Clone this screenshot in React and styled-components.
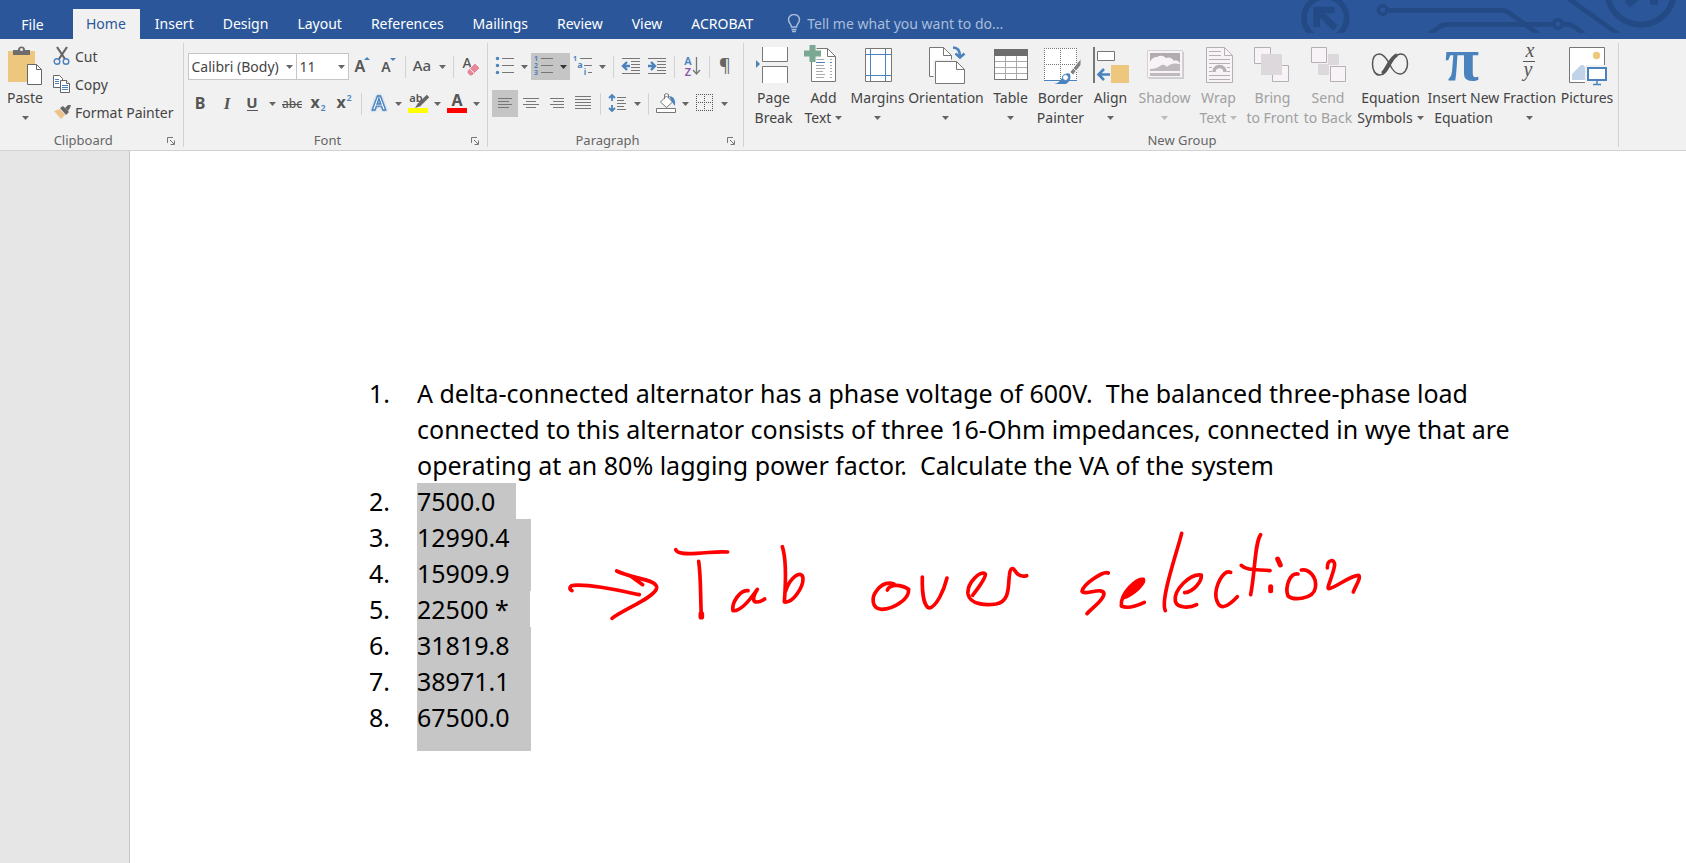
import React from "react";
import styled, { createGlobalStyle } from "styled-components";

const GlobalStyle = createGlobalStyle`
  * {
    box-sizing: border-box;
  }
  html, body, #root {
    height: 100%;
  }
  body {
    margin: 0;
    font-family: "Noto Sans", "Open Sans", sans-serif;
    font-size: 14px;
    color: #444;
    background: #fff;
  }
  button, input, select {
    font: inherit;
    color: inherit;
    border: none;
    background: none;
    padding: 0;
    margin: 0;
    outline: none;
  }
`;

const Window = styled.div`
  display: flex;
  flex-direction: column;
  min-height: 100%;
  overflow-x: hidden;
`;

const TabBar = styled.header`
  display: flex;
  align-items: flex-end;
  height: 39px;
  background: #2b579a;
  color: #fff;
`;

const Tabs = styled.nav`
  display: flex;
`;

const Tab = styled.button`
  height: 30px;
  padding: ${(props) => (props.$active ? "0 14px 0 13px" : "0 14px 0 15px")};
  line-height: 28px;
  white-space: nowrap;
  color: ${(props) => (props.$active ? "#2b579a" : "#fff")};
  background: ${(props) => (props.$active ? "#f1f1f1" : "transparent")};
`;

const FileTab = styled(Tab)`
  width: 73px;
  padding: 2px 8px 0 0;
`;

const TellMe = styled.label`
  display: flex;
  align-items: center;
  gap: 6px;
  height: 30px;
  margin-left: 20px;
  padding-bottom: 2px;
  color: #a9bddb;
`;

const TellMeInput = styled.input`
  width: 220px;
  &::placeholder {
    color: #a9bddb;
    opacity: 1;
  }
`;

const Circuit = styled.svg`
  margin-left: auto;
  align-self: flex-start;
  flex-shrink: 0;
`;

const Ribbon = styled.section`
  display: flex;
  height: 112px;
  padding: 4px 0 3px;
  background: #f1f1f1;
  border-bottom: 1px solid #d2d2d2;
`;

const Group = styled.div`
  display: flex;
  flex-direction: column;
  flex-shrink: 0;
  padding: 0 3px 0 4px;
  border-right: 1px solid #d2d2d2;
`;

const Tools = styled.div`
  display: flex;
  flex: 1;
`;

const Rows = styled.div`
  display: flex;
  flex-direction: column;
  gap: 10px;
  padding-top: 10px;
`;

const Row = styled.div`
  display: flex;
  align-items: center;
  height: 27px;
`;

const GroupFooter = styled.div`
  display: flex;
  align-items: center;
  height: 13px;
  font-size: 13px;
  line-height: 13px;
  color: #666;
`;

const GroupName = styled.span`
  flex: 1;
  text-align: center;
`;

const Launcher = styled.button`
  display: flex;
  justify-content: center;
  width: 18px;
`;

const Divider = styled.span`
  width: 1px;
  height: 22px;
  margin: 0 4px;
  background: #d2d2d2;
`;

const ToolButton = styled.button`
  display: flex;
  align-items: center;
  height: 27px;
  background: ${(props) => (props.$active ? "#c5c5c5" : "transparent")};
`;

const ArrowSlot = styled.span`
  display: flex;
  justify-content: center;
  width: 13px;
`;

const Combo = styled.label`
  display: flex;
  align-items: center;
  width: ${(props) => props.$width}px;
  height: 27px;
  padding-left: 2px;
  border: 1px solid #c6c6c6;
  background: #fff;
  & + & {
    border-left: none;
  }
`;

const ComboSelect = styled.select`
  flex: 1;
  min-width: 0;
  appearance: none;
  overflow: hidden;
`;

const PasteButton = styled.button`
  display: flex;
  flex-direction: column;
  align-items: center;
  width: 42px;
  padding-top: 2px;
  line-height: 20px;
`;

const ClipList = styled.div`
  display: flex;
  flex-direction: column;
  padding-left: 7px;
`;

const ClipButton = styled.button`
  display: flex;
  align-items: center;
  gap: 4px;
  height: 28px;
  padding: 0 7px 2px 0;
  white-space: nowrap;
`;

const BigButton = styled.button`
  display: flex;
  flex-direction: column;
  align-items: center;
  width: ${(props) => props.$width}px;
  padding-top: 2px;
  line-height: 20px;
  white-space: nowrap;
  &:disabled {
    color: #a0a0a0;
  }
`;

const IconArea = styled.span`
  display: flex;
  height: 43px;
`;

const LabelLine = styled.span`
  display: flex;
  align-items: center;
  justify-content: center;
  gap: 4px;
  height: 20px;
`;

const Workspace = styled.main`
  display: flex;
  flex: 1;
  background: #e6e6e6;
`;

const Sheet = styled.article`
  position: relative;
  flex: 1;
  margin-left: 129px;
  padding: 224px 120px 60px 239px;
  border-left: 1px solid #c6c6c6;
  background: #fff;
  color: #000;
  font-size: 25px;
  line-height: 36px;
`;

const Questions = styled.ol`
  margin: 0;
  padding: 0;
  list-style: none;
`;

const Question = styled.li`
  display: grid;
  grid-template-columns: 48px minmax(0, 1140px);
`;

const Paragraph = styled.span`
  white-space: pre-wrap;
`;

const Selected = styled.span`
  justify-self: start;
  padding: 0 21px ${(props) => (props.$last ? 16 : 0)}px 0;
  background: #c6c6c6;
`;

// pen annotation lies over the page
const Ink = styled.svg`
  position: absolute;
  left: 430px;
  top: 374px;
`;

const GREY = "#777";
const BLUE = "#4a82bd";
const SERIF = "Liberation Serif, serif";

const Arrow = ({ color = "#666" }) => (
  <svg width="7" height="4" viewBox="0 0 7 4" aria-hidden="true">
    <path d="M0 0h7L3.5 4z" fill={color} />
  </svg>
);

const Small = ({ label, arrow, active, children }) => (
  <ToolButton $active={active} aria-label={label} title={label}>
    <svg
      width="26"
      height="27"
      viewBox="0 0 26 27"
      fill="none"
      stroke={GREY}
      aria-hidden="true"
    >
      {children}
    </svg>
    {arrow && (
      <ArrowSlot>
        <Arrow color={active ? "#333" : "#666"} />
      </ArrowSlot>
    )}
  </ToolButton>
);

const Glyph = ({ x = 13, y = 19, size = 17, fill = "#555", ...rest }) => (
  <text
    x={x}
    y={y}
    fontSize={size}
    fill={fill}
    stroke="none"
    textAnchor="middle"
    {...rest}
  />
);

const Big = ({ label, lines, width, arrow, disabled, children }) => (
  <BigButton $width={width} disabled={disabled} aria-label={label}>
    <IconArea>
      <svg
        width="42"
        height="42"
        viewBox="-1 0 42 42"
        fill="none"
        stroke={disabled ? "#b4b0b4" : GREY}
        aria-hidden="true"
      >
        {children}
      </svg>
    </IconArea>
    <LabelLine>{lines[0]}</LabelLine>
    <LabelLine>
      {lines[1]}
      {arrow && <Arrow color={disabled ? "#bbb" : "#666"} />}
    </LabelLine>
  </BigButton>
);

const Footer = ({ name, launcher }) => (
  <GroupFooter>
    <GroupName>{name}</GroupName>
    {launcher && (
      <Launcher aria-label={`${name} settings`}>
        <svg width="8" height="8" viewBox="0 0 8 8" fill="none" stroke={GREY}>
          <path d="M.5 6V.5H6M3 3l4 4M7.5 3.5v4h-4" />
        </svg>
      </Launcher>
    )}
  </GroupFooter>
);

const ClipboardGroup = () => (
  <Group>
    <Tools>
      <PasteButton>
        <IconArea>
          <svg width="36" height="42" viewBox="0 0 36 42" aria-hidden="true">
            <path d="M1 6h27v31H1z" fill="#eec77e" />
            <path d="M6 5h5a3.5 3.5 0 0 1 7 0h5v5H6z" fill="#6d6d6d" />
            <circle cx="14.500" cy="4.500" r="1.500" fill="#f1f1f1" />
            <path
              d="M20.500 19.500h9l5 5v15h-14z"
              fill="#fff"
              stroke="#666"
            />
            <path d="M29.500 19.500v5h5" fill="none" stroke="#666" />
          </svg>
        </IconArea>
        <LabelLine>Paste</LabelLine>
        <LabelLine>
          <Arrow />
        </LabelLine>
      </PasteButton>
      <ClipList>
        <ClipButton>
          <svg width="18" height="20" viewBox="0 0 18 20" fill="none">
            <path d="M4 1l8 12M14 1L6 13" stroke="#666" strokeWidth="2.200" />
            <circle cx="4" cy="15.500" r="2.800" stroke={BLUE} strokeWidth="1.400" />
            <circle cx="13" cy="15.500" r="2.800" stroke={BLUE} strokeWidth="1.400" />
          </svg>
          Cut
        </ClipButton>
        <ClipButton>
          <svg width="18" height="20" viewBox="0 0 18 20" fill="#fff">
            <path d="M.5 1.500h6l3 3v9h-9z" stroke="#666" />
            <path d="M2 5.500h4M2 7.500h4M2 9.500h4" stroke={BLUE} />
            <path d="M7.500 6.500h6l3 3v9h-9z" stroke="#666" />
            <path d="M13.500 6.500v3h3" stroke="#666" />
            <path d="M9 11.500h6M9 13.500h6M9 15.500h6" stroke={BLUE} />
          </svg>
          Copy
        </ClipButton>
        <ClipButton>
          <svg width="18" height="20" viewBox="0 0 18 20">
            <path d="M1 9l6-2 5 6-4 4z" fill="#eec38a" />
            <path d="M7 6l3-2 6 6-3 3z" fill="#666" />
            <path d="M12 6l3-3h3l-1 3-2 3z" fill="#666" />
          </svg>
          Format Painter
        </ClipButton>
      </ClipList>
    </Tools>
    <Footer name="Clipboard" launcher />
  </Group>
);

const FontGroup = () => (
  <Group>
    <Tools>
      <Rows>
        <Row>
          <Combo $width={109}>
            <ComboSelect aria-label="Font">
              <option>Calibri (Body)</option>
            </ComboSelect>
            <ArrowSlot>
              <Arrow />
            </ArrowSlot>
          </Combo>
          <Combo $width={52}>
            <ComboSelect aria-label="Font size">
              <option>11</option>
            </ComboSelect>
            <ArrowSlot>
              <Arrow />
            </ArrowSlot>
          </Combo>
          <Small label="Grow font">
            <Glyph x={11} size={16} fontWeight="600">A</Glyph>
            <path d="M15 7l3-3 3 3z" fill={BLUE} stroke="none" />
          </Small>
          <Small label="Shrink font">
            <Glyph x={11} size={14} fontWeight="600">A</Glyph>
            <path d="M15 5h6l-3 3z" fill={BLUE} stroke="none" />
          </Small>
          <Divider />
          <Small label="Change case" arrow>
            <Glyph x={12} size={15} y={18} fontWeight="500">Aa</Glyph>
          </Small>
          <Divider />
          <Small label="Clear formatting">
            <Glyph x={9} y={15} size={14} fontWeight="500">A</Glyph>
            <path d="M9 18l8-8 5 5-8 8h-2l-3-3z" fill="#e8889a" stroke="#f1f1f1" />
            <path d="M11 15l5 5" stroke="#f1f1f1" />
          </Small>
        </Row>
        <Row>
          <Small label="Bold">
            <Glyph x={12} size={16} fontWeight="700">B</Glyph>
          </Small>
          <Small label="Italic">
            <Glyph size={17} fontWeight="700" fontStyle="italic" fontFamily={SERIF}>I</Glyph>
          </Small>
          <Small label="Underline" arrow>
            <Glyph x={12} size={15} y={18} fontWeight="700">U</Glyph>
            <path d="M7 20.500h11" stroke="#555" />
          </Small>
          <Small label="Strikethrough">
            <Glyph size={12} y={18} fontWeight="500">abc</Glyph>
            <path d="M3 14.500h20" stroke="#555" />
          </Small>
          <Small label="Subscript">
            <Glyph x={10} y={18} size={16} fontWeight="700">x</Glyph>
            <Glyph x={18} y={21} size={9} fill={BLUE} fontWeight="600">2</Glyph>
          </Small>
          <Small label="Superscript">
            <Glyph x={10} y={18} size={16} fontWeight="700">x</Glyph>
            <Glyph x={18} y={11} size={9} fill={BLUE} fontWeight="600">2</Glyph>
          </Small>
          <Divider />
          <Small label="Text effects" arrow>
            <text
              x="13"
              y="20"
              fontSize="20"
              fontWeight="600"
              textAnchor="middle"
              fill="#fff"
              stroke={BLUE}
              strokeWidth="1.300"
              filter="drop-shadow(0 0 1px #7fb0e0)"
            >
              A
            </text>
          </Small>
          <Small label="Highlight" arrow>
            <Glyph x={11} y={12} size={11} fontWeight="600">ab</Glyph>
            <path d="M23 6l-9 9" strokeWidth="3.500" stroke="#666" />
            <path d="M13 13l3 3-6 2z" fill="#666" stroke="none" />
            <path d="M3 18h20v5H3z" fill="#ff0" stroke="none" />
          </Small>
          <Small label="Font color" arrow>
            <Glyph x={13} y={16} size={16} fontWeight="700">A</Glyph>
            <path d="M3 18h20v5H3z" fill="#f00" stroke="none" />
          </Small>
        </Row>
      </Rows>
    </Tools>
    <Footer name="Font" launcher />
  </Group>
);

const ParagraphGroup = () => (
  <Group>
    <Tools>
      <Rows>
        <Row>
          <Small label="Bullets" arrow>
            <path d="M10 5.500h12M10 12.500h12M10 19.500h12" />
            <g fill={BLUE} stroke="none">
              <circle cx="5.500" cy="5.500" r="1.700" />
              <circle cx="5.500" cy="12.500" r="1.700" />
              <circle cx="5.500" cy="19.500" r="1.700" />
            </g>
          </Small>
          <Small label="Numbering" arrow active>
            <path d="M10 5.500h12M10 12.500h12M10 19.500h12" />
            <g fontWeight="700">
              <Glyph x={5} y={8} size={7} fill={BLUE}>1</Glyph>
              <Glyph x={5} y={15} size={7} fill={BLUE}>2</Glyph>
              <Glyph x={5} y={22} size={7} fill={BLUE}>3</Glyph>
            </g>
          </Small>
          <Small label="Multilevel list" arrow>
            <path d="M10 5.500h12M14 12.500h8M18 19.500h4" />
            <g fontWeight="700">
              <Glyph x={5} y={8} size={7} fill={BLUE}>1</Glyph>
              <Glyph x={10} y={15} size={9} fill={BLUE}>a</Glyph>
              <Glyph x={15} y={22} size={8} fill={BLUE}>i</Glyph>
            </g>
          </Small>
          <Divider />
          <Small label="Decrease indent">
            <path d="M4 5.500h18M13 8.500h9M13 11.500h9M13 14.500h9M13 17.500h9M4 20.500h18" />
            <path d="M12 13H6M9 9l-4 4 4 4" stroke={BLUE} strokeWidth="2.400" />
          </Small>
          <Small label="Increase indent">
            <path d="M4 5.500h18M13 8.500h9M13 11.500h9M13 14.500h9M13 17.500h9M4 20.500h18" />
            <path d="M4 13h6M7 9l4 4-4 4" stroke={BLUE} strokeWidth="2.400" />
          </Small>
          <Divider />
          <Small label="Sort">
            <Glyph x={9} y={12} size={11} fill={BLUE} fontWeight="600">A</Glyph>
            <Glyph x={9} y={23} size={11} fill="#8a55a8" fontWeight="600">Z</Glyph>
            <path d="M17.500 4v17M14 17l3.500 4 3.500-4" strokeWidth="1.300" />
          </Small>
          <Divider />
          <Small label="Show marks">
            <Glyph x={11} y={19} size={18} fill="#666">¶</Glyph>
          </Small>
        </Row>
        <Row>
          <Small label="Align left" active>
            <path d="M6 8.500h14M6 11.500h11M6 14.500h14M6 17.500h11" />
          </Small>
          <Small label="Center">
            <path d="M5 8.500h16M8 11.500h10M5 14.500h16M8 17.500h10" />
          </Small>
          <Small label="Align right">
            <path d="M6 8.500h14M9 11.500h11M6 14.500h14M9 17.500h11" />
          </Small>
          <Small label="Justify">
            <path d="M5 6.500h16M5 9.500h16M5 12.500h16M5 15.500h16M5 18.500h16" />
          </Small>
          <Divider />
          <Small label="Line spacing" arrow>
            <path d="M12 7.500h9M12 10.500h7M12 13.500h9M12 16.500h7M12 19.500h9" />
            <path
              d="M7 5v6M7 15v6M4 8l3-3 3 3M4 18l3 3 3-3"
              stroke={BLUE}
              strokeWidth="1.800"
            />
          </Small>
          <Divider />
          <Small label="Shading" arrow>
            <path d="M3.500 18.500h19v4h-19z" fill="#fff" />
            <path d="M7.500 12l6-6 6 6-6 5.500z" fill="#fff" />
            <path d="M11.500 9V4.500q2-2 4 0V8" />
            <path d="M16 6q7 0 6 10l-3-4z" fill={BLUE} stroke="none" />
          </Small>
          <Small label="Borders" arrow>
            <path
              d="M4 4.500h17M4 12.500h17M4 20.500h17M4.500 4v17M12.500 4v17M20.500 4v17"
              stroke="#555"
              strokeDasharray="1 1"
            />
          </Small>
        </Row>
      </Rows>
    </Tools>
    <Footer name="Paragraph" launcher />
  </Group>
);

const NewGroup = () => (
  <Group>
    <Tools>
      <Big label="Page Break" lines={["Page", "Break"]} width={50}>
        <path d="M9.500 2v14.500h25V2M9.500 38V21.500h25V38" fill="#fff" />
        <path d="M3 15l4 4-4 4z" fill={BLUE} stroke="none" />
      </Big>
      <Big label="Add Text" lines={["Add", "Text"]} width={50} arrow>
        <path d="M8.500 3.500h16l8 8v25h-24z" fill="#fff" />
        <path d="M24.500 3.500v8h8" />
        <path
          d="M13 14.500h8M13 20.500h8M13 23.500h9M13 26.500h7M13 29.500h9M13 32.500h8M27 14.500h2M27 20.500h2M27 23.500h2M27 26.500h2M27 29.500h2M27 32.500h2"
          stroke="#aaa"
        />
        <path d="M13 17.500h9M27 17.500h2" stroke={BLUE} />
        <path d="M1 8.500h17M9.500 0v17" stroke="#f1f1f1" strokeWidth="8" />
        <path d="M1 8.500h17M9.500 0v17" stroke="#7aa893" strokeWidth="6" />
      </Big>
      <Big label="Margins" lines={["Margins"]} width={58} arrow>
        <path d="M8.500 3.500h26v33h-26z" fill="#fff" />
        <path d="M13.500 4v32M28.500 4v32M9 9.500h25M9 30.500h25" stroke={BLUE} />
      </Big>
      <Big label="Orientation" lines={["Orientation"]} width={79} arrow>
        <path d="M3.500 2.500h14l8 8v21h-22z" fill="#fff" />
        <path d="M17.500 2.500v8h8" />
        <path d="M9.500 16.500h21l8 8v14h-29z" fill="#fff" stroke="#f1f1f1" strokeWidth="4" />
        <path d="M9.500 16.500h21l8 8v14h-29z" fill="#fff" />
        <path d="M30.500 16.500v8h8" />
        <path d="M27 2.500q7 0 7 9M29.500 8.500l4.500 4 4.500-4" stroke={BLUE} strokeWidth="2.500" />
      </Big>
      <Big label="Table" lines={["Table"]} width={50} arrow>
        <path d="M4.500 4.500h33v30h-33z" fill="#fff" />
        <path d="M5 16.500h32M5 22.500h32M5 28.500h32M15.500 11v23M26.500 11v23" stroke="#aaa" />
        <path d="M4.500 4.500h33v30h-33z" />
        <path d="M4 4h34v7H4z" fill="#6d6d6d" stroke="none" />
      </Big>
      <Big label="Border Painter" lines={["Border", "Painter"]} width={50}>
        <path d="M4 3h33v32H4z" fill="#fff" stroke="none" />
        <path
          d="M4 3.500h33M4 19.500h33M4.500 3v32M20.500 3v32M36.500 3v32"
          strokeDasharray="1 1"
        />
        <path d="M4 35.500h33" stroke={BLUE} />
        <path d="M41 13.500L30 27l3 3 8-10z" fill="#808080" stroke="#f1f1f1" />
        <path d="M31 21l5 5" stroke="#f1f1f1" />
        <path d="M14 39q6-1 9-8 3-4 7-2 2 6-4 10z" fill={BLUE} stroke="none" />
        <circle cx="25.500" cy="32.500" r="3" fill="#fff" stroke={BLUE} />
      </Big>
      <Big label="Align" lines={["Align"]} width={50} arrow>
        <path d="M4 2v36" strokeWidth="2" />
        <path d="M7.500 6.500h17v9h-17z" fill="#fff" />
        <path d="M21 20h18v18H21z" fill="#eec77e" stroke="none" />
        <path d="M20 29.500H9M14 24l-5.500 5.500L14 35" stroke={BLUE} strokeWidth="2.600" />
      </Big>
      <Big label="Shadow" lines={["Shadow"]} width={58} arrow disabled>
        <path d="M5 7h35v27H5z" fill="#ccc" stroke="none" />
        <path d="M3.500 5.500h35v27h-35z" fill="#f7f3f7" stroke="#d4d0d4" />
        <path d="M6 8h30v10q-3-4-6-2-3-5-8-3-4-4-9-1-5 0-7 5z" fill="#b0acb0" stroke="none" />
        <path d="M6 26v-2q6 0 10-3t7 1q4-5 13-3v7zM6 28h30v3H6z" fill="#bdb9bd" stroke="none" />
      </Big>
      <Big label="Wrap Text" lines={["Wrap", "Text"]} width={50} arrow disabled>
        <path d="M8.500 2.500h18l8 8v27h-26z" fill="#f7f3f7" />
        <path d="M26.500 2.500v8h8" />
        <path d="M11 6.500h12M11 10.500h12M11 14.500h21M11 18.500h21M11 22.500h3M29 22.500h3M11 26.500h3M29 26.500h3M11 30.500h21M11 34.500h21" />
        <path d="M16 27a5.500 5.500 0 0 1 11 0" strokeWidth="3.500" />
      </Big>
      <Big label="Bring to Front" lines={["Bring", "to Front"]} width={58} disabled>
        <path d="M2.500 2.500h16v16h-16zM20.500 20.500h16v16h-16z" fill="#f7f3f7" />
        <path d="M9 9h21v21H9z" fill="#dcd8dc" stroke="none" />
      </Big>
      <Big label="Send to Back" lines={["Send", "to Back"]} width={53} disabled>
        <path d="M20 9h11v11H20zM10 19h11v11H10z" fill="#dcd8dc" stroke="none" />
        <path d="M3.500 2.500h15v15h-15zM22.500 21.500h15v15h-15z" fill="#f7f3f7" />
      </Big>
      <Big label="Equation Symbols" lines={["Equation", "Symbols"]} width={72} arrow>
        <path
          d="M20 20C16 12 13 9 9.500 9 5 9 2.500 13 2.500 19s2.500 11 7 11c5 0 7-4 10.500-10s6-11 10.500-11c5 0 7 5 7 10s-3 10-7.500 10c-4 0-6.500-2-10-9z"
          stroke="#555"
          strokeWidth="1.500"
        />
        <path d="M12 28.500c4-2 8-16 15-18.500" stroke="#555" strokeWidth="3.500" />
      </Big>
      <Big label="Insert New Equation" lines={["Insert New", "Equation"]} width={74}>
        <Glyph x={19} y={35} size={62} fill={BLUE} fontFamily={SERIF} fontWeight="700">π</Glyph>
      </Big>
      <Big label="Fraction" lines={["Fraction"]} width={58} arrow>
        <g fontFamily={SERIF} fontStyle="italic">
          <Glyph x={21} y={12} size={20}>x</Glyph>
          <Glyph x={19} y={31} size={20}>y</Glyph>
        </g>
        <path d="M14 16.500h12" stroke="#555" />
      </Big>
      <Big label="Pictures" lines={["Pictures"]} width={57}>
        <path d="M2.500 2.500h35v35h-35z" fill="#fff" />
        <circle cx="29.500" cy="10.500" r="3.700" fill="#eec77e" stroke="none" />
        <path d="M5 35v-6l9-9h2l4 4v11z" fill="#c1d3e8" stroke="none" />
        <path d="M18 20h22v21H18z" fill="#f1f1f1" stroke="none" />
        <path d="M21 23h18v12H21z" fill="#fff" stroke={BLUE} strokeWidth="2" />
        <path d="M30 36v3M26 39.500h8" stroke={BLUE} strokeWidth="1.500" />
      </Big>
    </Tools>
    <Footer name="New Group" />
  </Group>
);

const TABS = [
  "Home",
  "Insert",
  "Design",
  "Layout",
  "References",
  "Mailings",
  "Review",
  "View",
  "ACROBAT",
];

const QUESTION =
  "A delta-connected alternator has a phase voltage of 600V.  The balanced three-phase load connected to this alternator consists of three 16-Ohm impedances, connected in wye that are operating at an 80% lagging power factor.  Calculate the VA of the system";

const ANSWERS = [
  "7500.0",
  "12990.4",
  "15909.9",
  "22500 *",
  "31819.8",
  "38971.1",
  "67500.0",
];

const App = () => {
  return (
    <Window>
      <GlobalStyle />
      <TabBar>
        <Tabs>
          <FileTab>File</FileTab>
          {TABS.map((name) => (
            <Tab key={name} $active={name === "Home"}>
              {name}
            </Tab>
          ))}
        </Tabs>
        <TellMe>
          <svg width="14" height="19" viewBox="0 0 14 19" fill="none" stroke="#a9bddb">
            <path
              d="M4.500 13c0-3-3-4-3-7.500a5.500 5 0 0 1 11 0c0 3.500-3 4.500-3 7.500z"
              strokeWidth="1.500"
            />
            <path d="M4.500 15.500h5M5 17.500h4" strokeWidth="1.500" />
          </svg>
          <TellMeInput
            aria-label="Tell me what you want to do"
            placeholder="Tell me what you want to do..."
          />
        </TellMe>
        <Circuit
          width="386"
          height="33"
          viewBox="-240 0 1158 99"
          fill="none"
          stroke="#234a84"
          strokeWidth="14"
          aria-hidden="true"
        >
          <circle cx="-164" cy="54" r="64" strokeWidth="17" />
          <path d="M-190 82V30h54M-188 32l54 52" strokeWidth="20" />
          <circle cx="8" cy="30" r="13" strokeWidth="11" />
          <path d="M24 31h340q14 0 26 9l84 62M148 102l28-20q12-9 28-9h312M550 73h10q14 0 24 8l28 21" />
          <circle cx="534" cy="72" r="13" strokeWidth="11" />
          <path d="M566-4l148 106" />
          <circle cx="782" cy="-26" r="100" strokeWidth="18" />
          <path d="M742 14l34-30M822-10v24" strokeWidth="24" />
        </Circuit>
      </TabBar>
      <Ribbon>
        <ClipboardGroup />
        <FontGroup />
        <ParagraphGroup />
        <NewGroup />
      </Ribbon>
      <Workspace>
        <Sheet>
          <Questions>
            <Question>
              <span>1.</span>
              <Paragraph>{QUESTION}</Paragraph>
            </Question>
            {ANSWERS.map((answer, i) => (
              <Question key={answer}>
                <span>{i + 2}.</span>
                <Selected $last={i === ANSWERS.length - 1}>{answer}</Selected>
              </Question>
            ))}
          </Questions>
          <Ink
            width="820"
            height="110"
            viewBox="60 45 2460 330"
            fill="none"
            stroke="#f00"
            strokeWidth="11"
            strokeLinecap="round"
            strokeLinejoin="round"
            role="img"
            aria-label="Tab over selection"
          >
            <path d="M96 242C84 236 92 226 100 226C150 222 230 240 298 254" />
            <path d="M230 183C280 207 352 208 350 234C346 262 250 298 216 325M275 200L308 224" />
            <path d="M407 119C412 132 440 132 470 130C510 128 530 124 563 126" />
            <path d="M476 154C483 200 481 260 484 318M484 312V320" />
            <path d="M484 312v8" strokeWidth="17" />
            <path d="M624 242C600 238 574 280 579 302C600 306 630 270 652 238C634 268 640 276 652 276C662 276 668 270 674 267" />
            <path d="M727 110C740 150 738 210 733 276C760 280 790 230 789 205C786 178 750 200 736 245" />
            <path d="M1042 240C1050 222 1080 222 1106 238C1108 268 1060 298 1025 298C994 296 994 262 1010 242C1030 215 1050 218 1062 222" />
            <path d="M1147 201C1146 240 1150 290 1168 294C1190 290 1212 240 1221 204" />
            <g transform="translate(1260 0)">
              <path d="M38 256C50 240 78 205 76 192C62 178 20 220 24 252C30 285 80 286 108 282C150 274 144 230 148 198C150 170 160 172 166 184C176 200 190 200 200 197" />
              <path d="M445 189C430 182 370 222 366 244C372 258 432 228 432 252C430 272 400 290 381 311" />
              <path d="M494 262C520 252 556 220 550 208C530 204 480 250 484 288C500 296 530 288 553 277" />
              <path d="M502 250L544 216" strokeWidth="18" />
              <path d="M665 70C650 130 600 270 616 302" />
              <path d="M674 248C700 246 726 214 724 195C690 190 640 240 646 274C652 296 690 294 710 284" />
              <path d="M812 187C790 176 764 230 768 262C776 304 800 294 832 260" />
              <path d="M902 74C884 100 886 180 872 254M844 166C860 182 890 178 930 182" />
              <path d="M932 230v12M953 147l8 18" strokeWidth="15" />
              <path d="M1014 192C990 188 974 230 984 258C1000 272 1060 268 1066 234C1072 200 1046 176 1024 180" />
              <path d="M1102 174C1102 145 1124 148 1124 164C1122 190 1098 236 1106 236C1130 232 1170 196 1196 196C1204 204 1186 228 1180 246" />
            </g>
          </Ink>
        </Sheet>
      </Workspace>
    </Window>
  );
};

export default App;
